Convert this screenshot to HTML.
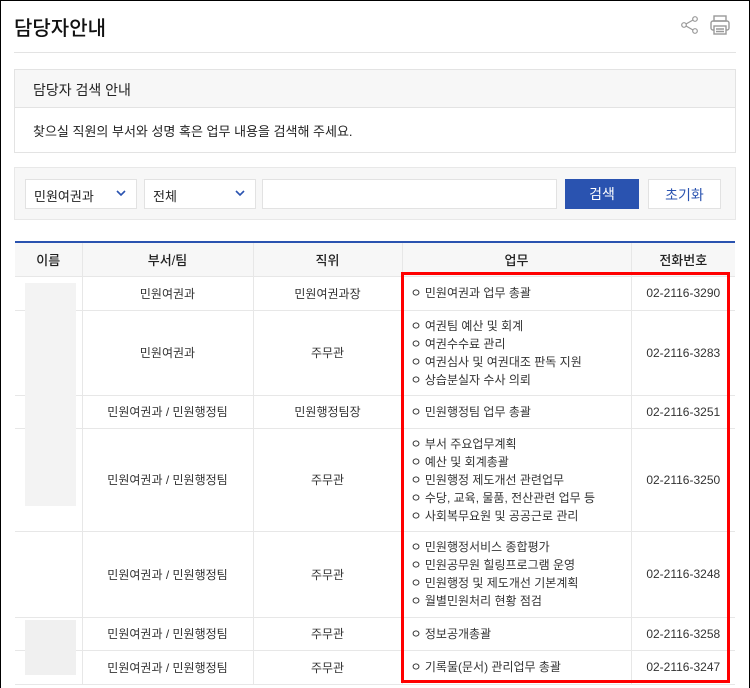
<!DOCTYPE html>
<html><head><meta charset="utf-8"><style>
*{margin:0;padding:0;box-sizing:border-box}
body{width:750px;height:688px;overflow:hidden;background:#fff;font-family:"Liberation Sans","Noto Sans CJK KR",sans-serif;color:#222;position:relative}
.frame{position:absolute;left:0;top:0;width:750px;height:688px;border:1px solid #000;border-bottom:none}
.abs{position:absolute}
h1{position:absolute;left:14px;top:12px;font-size:20px;font-weight:500;color:#111}
.hr{position:absolute;left:14px;top:52px;width:722px;height:1px;background:#e3e3e3}
.box{position:absolute;left:14px;top:69px;width:722px;height:84px;border:1px solid #e3e3e3}
.box .t{height:38px;background:#f7f7f7;border-bottom:1px solid #e3e3e3;font-size:14px;padding:10px 18px;color:#222}
.box .d{font-size:13px;padding:13px 18px;color:#222}
.sbar{position:absolute;left:14px;top:167px;width:722px;height:53px;background:#f7f7f7;border:1px solid #e8e8e8}
.sel{position:absolute;top:179px;height:30px;background:#fff;border:1px solid #e2e2e2;font-size:13px;padding:6px 8px}
.sel svg{position:absolute;right:10px;top:10px}
.btn{position:absolute;top:179px;height:30px;font-size:14px;text-align:center;line-height:30px}
table{position:absolute;left:15px;top:241px;width:720px;border-collapse:collapse;font-size:12px;color:#333;border-top:2px solid #2a53b0}
td,th{border:1px solid #e7e7e7;text-align:center;vertical-align:middle}
th{background:#f7f7f7;font-weight:500;height:34px;font-size:13px;color:#222}
td.w{text-align:left;padding-left:8px;line-height:18px}
tr>:first-child{border-left:none}tr>:last-child{border-right:none}
</style></head><body>
<div class="frame"></div>
<h1>담당자안내</h1>
<svg class="abs" style="left:680px;top:15px" width="20" height="20" viewBox="0 0 20 20" fill="none" stroke="#999" stroke-width="1.2"><circle cx="15" cy="4" r="2.3"/><circle cx="4" cy="10" r="2.3"/><circle cx="15" cy="16" r="2.3"/><path d="M6 9l7-4M6 11l7 4"/></svg>
<svg class="abs" style="left:709px;top:14px" width="22" height="22" viewBox="0 0 22 22" fill="none" stroke="#999" stroke-width="1.4"><rect x="5" y="2" width="12" height="5"/><rect x="2" y="7" width="18" height="9" rx="2"/><rect x="5" y="12" width="12" height="8" fill="#fff"/><path d="M7 15h8M7 17.5h8"/></svg>
<div class="hr"></div>
<div class="box"><div class="t">담당자 검색 안내</div><div class="d">찾으실 직원의 부서와 성명 혹은 업무 내용을 검색해 주세요.</div></div>
<div class="sbar"></div>
<div class="sel" style="left:25px;width:112px">민원여권과<svg width="10" height="7" viewBox="0 0 10 7"><path d="M1 1l4 4 4-4" fill="none" stroke="#2a53b0" stroke-width="1.6"/></svg></div>
<div class="sel" style="left:144px;width:112px">전체<svg width="10" height="7" viewBox="0 0 10 7"><path d="M1 1l4 4 4-4" fill="none" stroke="#2a53b0" stroke-width="1.6"/></svg></div>
<div class="sel" style="left:262px;width:295px"></div>
<div class="btn" style="left:565px;width:74px;background:#2a53b0;color:#fff">검색</div>
<div class="btn" style="left:648px;width:73px;background:#fff;border:1px solid #e2e2e2;color:#2a53b0">초기화</div>
<table>
<colgroup><col style="width:67px"><col style="width:171px"><col style="width:149px"><col style="width:229px"><col></colgroup>
<tr><th>이름</th><th>부서/팀</th><th>직위</th><th>업무</th><th>전화번호</th></tr>
<tr style="height:34px"><td></td><td>민원여권과</td><td>민원여권과장</td><td class="w">ㅇ 민원여권과 업무 총괄</td><td>02-2116-3290</td></tr>
<tr style="height:85px"><td></td><td>민원여권과</td><td>주무관</td><td class="w">ㅇ 여권팀 예산 및 회계<br>ㅇ 여권수수료 관리<br>ㅇ 여권심사 및 여권대조 판독 지원<br>ㅇ 상습분실자 수사 의뢰</td><td>02-2116-3283</td></tr>
<tr style="height:33px"><td></td><td>민원여권과 / 민원행정팀</td><td>민원행정팀장</td><td class="w">ㅇ 민원행정팀 업무 총괄</td><td>02-2116-3251</td></tr>
<tr style="height:103px"><td></td><td>민원여권과 / 민원행정팀</td><td>주무관</td><td class="w">ㅇ 부서 주요업무계획<br>ㅇ 예산 및 회계총괄<br>ㅇ 민원행정 제도개선 관련업무<br>ㅇ 수당, 교육, 물품, 전산관련 업무 등<br>ㅇ 사회복무요원 및 공공근로 관리</td><td>02-2116-3250</td></tr>
<tr style="height:86px"><td></td><td>민원여권과 / 민원행정팀</td><td>주무관</td><td class="w">ㅇ 민원행정서비스 종합평가<br>ㅇ 민원공무원 힐링프로그램 운영<br>ㅇ 민원행정 및 제도개선 기본계획<br>ㅇ 월별민원처리 현황 점검</td><td>02-2116-3248</td></tr>
<tr style="height:33px"><td></td><td>민원여권과 / 민원행정팀</td><td>주무관</td><td class="w">ㅇ 정보공개총괄</td><td>02-2116-3258</td></tr>
<tr style="height:34px"><td></td><td>민원여권과 / 민원행정팀</td><td>주무관</td><td class="w">ㅇ 기록물(문서) 관리업무 총괄</td><td>02-2116-3247</td></tr>
</table>
<div class="abs" style="left:25px;top:283px;width:51px;height:223px;background:#f3f3f3"></div>
<div class="abs" style="left:25px;top:620px;width:51px;height:55px;background:#f0f0f0"></div>
<div class="abs" style="left:401px;top:272px;width:329px;height:411px;border:3px solid #f00"></div>
</body></html>
